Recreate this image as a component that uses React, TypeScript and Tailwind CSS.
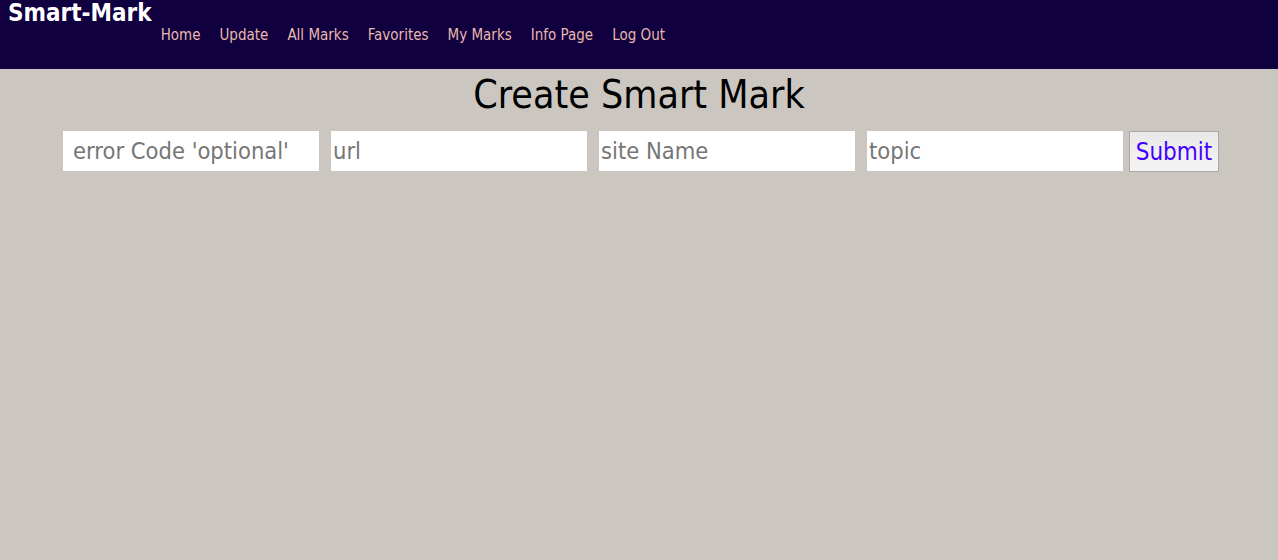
import React from "react";

const font = { fontFamily: '"DejaVu Sans Condensed", "DejaVu Sans", sans-serif' };

export default function App() {
  const links = ["Home", "Update", "All Marks", "Favorites", "My Marks", "Info Page", "Log Out"];
  const inputCls =
    "h-[40px] w-[256px] bg-white text-[23.5px] text-black placeholder:text-[#767676] outline-none";
  return (
    <div className="min-h-[560px] bg-[#cbc7c0]" style={font}>
      <header className="flex h-[69px] bg-[#10003f]">
        <div className="pl-2 text-[24px] font-bold leading-[27px] text-white">Smart-Mark</div>
        <nav className="ml-[9px] mt-[25px] flex gap-[19px]">
          {links.map((l) => (
            <a key={l} className="text-[15px] leading-[20px] text-[#e8b9ad]">
              {l}
            </a>
          ))}
        </nav>
      </header>
      <h1 className="mt-[2px] text-center text-[39px] leading-[48px] text-black">Create Smart Mark</h1>
      <form className="mt-[12px] flex justify-center gap-[12px] pl-[4px]">
        <input placeholder="error Code 'optional'" className={`${inputCls} pl-[10px]`} />
        <input placeholder="url" className={`${inputCls} pl-[2px]`} />
        <input placeholder="site Name" className={`${inputCls} pl-[2px]`} />
        <div className="flex gap-[6px]">
          <input placeholder="topic" className={`${inputCls} pl-[2px]`} />
          <button
            type="button"
            className="h-[41px] w-[90px] border border-[#a9a9a9] bg-gradient-to-b from-[#e9e9e9] to-[#f4f4f4] text-[24px] text-[#4400ff]"
          >
            Submit
          </button>
        </div>
      </form>
    </div>
  );
}
